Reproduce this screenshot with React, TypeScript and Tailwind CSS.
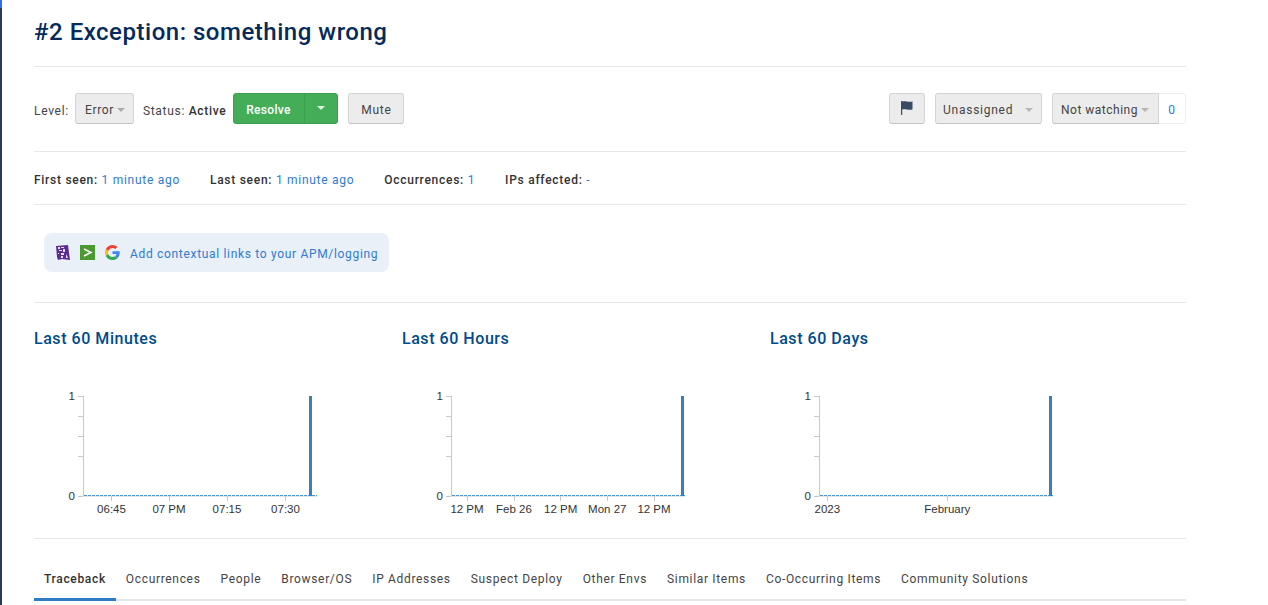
import React from "react";

// pestañas
const tabs = ["Traceback", "Occurrences", "People", "Browser/OS", "IP Addresses", "Suspect Deploy", "Other Envs", "Similar Items", "Co-Occurring Items", "Community Solutions"];

const charts = [
  { title: "Last 60 Minutes", barX: 275, ticks: [[77.5, "06:45"], [135, "07 PM"], [193, "07:15"], [251.5, "07:30"]] },
  { title: "Last 60 Hours", barX: 279, ticks: [[65, "12 PM"], [112, "Feb 26"], [158.7, "12 PM"], [205.3, "Mon 27"], [252, "12 PM"]] },
  { title: "Last 60 Days", barX: 279, ticks: [[57.3, "2023"], [177.3, "February"]] },
] as { title: string; barX: number; ticks: [number, string][] }[];

function Caret({ className }: { className: string }) {
  return <span className={`w-0 h-0 border-x-[4px] border-x-transparent border-t-[4px] ${className}`} />;
}

function GrayButton({ children, className = "" }: { children: React.ReactNode; className?: string }) {
  return (
    <div className={`h-[31px] flex items-center rounded-[3px] border border-[#d4d4d4] border-b-[#c4c4c4] bg-[#ececec] text-[#444] pt-[3px] ${className}`}>
      {children}
    </div>
  );
}

function Chart({ ticks, barX }: { ticks: [number, string][]; barX: number }) {
  return (
    <svg width="340" height="150" className="block">
      <g fill="none" stroke="#c8c8c8">
        <path d="M49.500 20V120" />
        <path d="M44 20.500H49M44 40.500H49M44 60.500H49M44 80.500H49M44 120.500H49" />
        <path d="M49 120.500H283" stroke="#dfe6ec" />
        {ticks.map(([x], i) => (
          <path key={i} d={`M${Math.floor(x) + 0.5} 120V125`} />
        ))}
      </g>
      <path d="M50 119.500H283" stroke="#4a97d2" strokeDasharray="3 1" fill="none" />
      <rect x={barX} y="20" width="3" height="100" fill="#3a7fb5" />
      <g fontFamily="'Liberation Sans', sans-serif" fontSize="11.5" fill="#333" textAnchor="middle">
        <text x="41" y="24" textAnchor="end">1</text>
        <text x="41" y="124" textAnchor="end">0</text>
        {ticks.map(([x, label], i) => (
          <text key={i} x={x} y="137">{label}</text>
        ))}
      </g>
    </svg>
  );
}

export default function App() {
  return (
    <div className="h-[605px] w-[1268px] overflow-hidden bg-white flex font-['Roboto',sans-serif] text-[#333]">
      <div className="w-[2px] h-full bg-[#2b3a55] flex flex-col">
        <div className="h-[8px] bg-[#2f6fed]" />
      </div>

      <main className="ml-[32px] w-[1152px] flex flex-col">
        <div className="h-[67px] border-b border-[#e8e8e8] flex items-center pb-[3px]">
          <h1 className="text-[24px] leading-none font-medium tracking-[0.52px] text-[#042b5a]">#2 Exception: something wrong</h1>
        </div>

        <div className="h-[85px] border-b border-[#e8e8e8] flex items-center justify-between pb-[2px] text-[12px] tracking-[0.7px]">
          <div className="flex items-center">
            <span className="mt-[6px] text-[#444]">Level:</span>
            <GrayButton className="ml-[6px] w-[59px] pl-[9px] gap-[3px]">
              Error <Caret className="border-t-[#aaa]" />
            </GrayButton>
            <span className="ml-[9px] mt-[6px] text-[#444]">
              Status: <b className="font-medium text-[#333]">Active</b>
            </span>
            <div className="ml-[7px] h-[31px] w-[105px] flex rounded-[3px] bg-[#43ad58] border border-[#3b9f4f] text-white font-medium tracking-[0.3px]">
              <span className="w-[71px] flex items-center justify-center border-r border-[#3b9f4f] pt-[3px] pr-[2px]">Resolve</span>
              <span className="flex-1 flex items-center justify-center"><Caret className="border-t-[#dff3e3]" /></span>
            </div>
            <GrayButton className="ml-[10px] w-[56px] justify-center">Mute</GrayButton>
          </div>

          <div className="flex items-center">
            <GrayButton className="w-[36px] justify-center">
              <svg width="14" height="16" viewBox="0 0 14 16" className="-mt-[3px]">
                <path d="M1 1h1.200v14H1zM2.200 1.500c3-1 6 1 10.300 0v8c-4.300 1-7.300-1-10.300 0z" fill="#3a4a66" />
              </svg>
            </GrayButton>
            <GrayButton className="ml-[10px] w-[107px] pl-[7px] pr-[8px] justify-between tracking-[0.75px]">
              Unassigned <Caret className="border-t-[#b5b5b5]" />
            </GrayButton>
            <GrayButton className="ml-[10px] w-[107px] pl-[8px] gap-[3px] rounded-r-none tracking-[0.5px]">
              Not watching <Caret className="border-t-[#b5b5b5]" />
            </GrayButton>
            <div className="h-[31px] w-[27px] flex items-center justify-center border border-l-0 border-[#eee] rounded-r-[3px] text-[#2f7bd0] pt-[3px]">0</div>
          </div>
        </div>

        <div className="h-[53px] border-b border-[#e8e8e8] flex items-center gap-[30px] pt-[3px] text-[12px] tracking-[0.72px]">
          {[["First seen:", "1 minute ago"], ["Last seen:", "1 minute ago"], ["Occurrences:", "1"], ["IPs affected:", "-"]].map(([k, v]) => (
            <span key={k}>
              <b className="font-medium">{k}</b> <span className="text-[#2f7bd0]">{v}</span>
            </span>
          ))}
        </div>

        <div className="h-[98px] border-b border-[#e8e8e8] pt-[28px] pl-[10px]">
          <div className="h-[39px] w-[345px] rounded-[8px] bg-[#e9f0f8] flex items-center pl-[11px] text-[12px] tracking-[0.68px] text-[#2f7bd0]">
            <svg width="16" height="16" viewBox="0 0 16 16" className="shrink-0">
              <path d="M1 1l12-1 1 8 1 7-8-1-4 1-1-3z" fill="#5c2d91" />
              <path d="M3 2h2v2H3zM6 2h3v1H6zM4 5h3v1H4zM8 4h2v3H8zM6 8h3v2H6zM6 11h2v2H6zM11 9l2 4-2 0zM3 8h1v1H3z" fill="#e8e0f2" />
            </svg>
            <svg width="15" height="15" viewBox="0 0 15 15" className="ml-[9px] shrink-0">
              <rect width="15" height="15" fill="#4a9a31" />
              <path d="M4 4l7 3.500-7 3.500" fill="none" stroke="#fff" strokeWidth="1.500" />
            </svg>
            <svg width="15" height="15" viewBox="0 0 48 48" className="ml-[10px] shrink-0">
              <path fill="#EA4335" d="M24 9.500c3.500 0 6.700 1.300 9.100 3.500l6.800-6.800C35.800 2.400 30.200 0 24 0 14.600 0 6.500 5.400 2.600 13.200l7.900 6.200C12.400 13.700 17.700 9.500 24 9.500z" />
              <path fill="#4285F4" d="M47 24.500c0-1.600-.1-3.100-.4-4.500H24v9h12.900c-.6 3-2.200 5.500-4.700 7.200l7.700 6c4.500-4.200 7.100-10.300 7.100-17.700z" />
              <path fill="#FBBC05" d="M10.500 28.600c-.5-1.400-.8-3-.8-4.600s.3-3.200.8-4.600l-7.900-6.200C.9 16.500 0 20.100 0 24s.9 7.500 2.600 10.800l7.900-6.200z" />
              <path fill="#34A853" d="M24 48c6.500 0 11.900-2.100 15.900-5.800l-7.700-6c-2.200 1.500-4.900 2.300-8.200 2.300-6.300 0-11.600-4.200-13.500-9.900l-7.900 6.200C6.500 42.600 14.600 48 24 48z" />
            </svg>
            <span className="ml-[10px] mt-[2px]">Add contextual links to your APM/logging</span>
          </div>
        </div>

        <div className="h-[236px] border-b border-[#e8e8e8] grid grid-cols-[368px_368px_368px] pt-[26px]">
          {charts.map((c) => (
            <div key={c.title}>
              <h3 className="text-[16px] leading-[20px] font-medium tracking-[0.55px] text-[#004a8c]">{c.title}</h3>
              <div className="mt-[27px]">
                <Chart ticks={c.ticks} barX={c.barX} />
              </div>
            </div>
          ))}
        </div>

        <div className="h-[62px] border-b-2 border-[#e4e7ea] flex items-end text-[12px] tracking-[0.67px] text-[#444]">
          {tabs.map((t, i) => (
            <div
              key={t}
              className={`h-[62px] -mb-[2px] flex items-center pt-[21px] px-[10px] border-b-[3px] ${i === 0 ? "border-[#2f7bc4] font-medium text-[#333]" : "border-transparent"}`}
            >
              {t}
            </div>
          ))}
        </div>
      </main>
    </div>
  );
}
